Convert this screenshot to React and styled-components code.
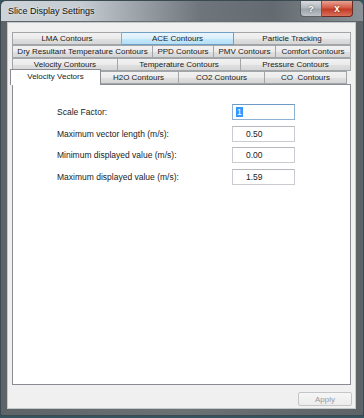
import React from "react";
import styled, { createGlobalStyle } from "styled-components";

const Global = createGlobalStyle`
  html, body { margin: 0; padding: 0; }
  body {
    background: #35535e;
    width: 364px;
    height: 418px;
    overflow: hidden;
    font-family: "Liberation Sans", Arial, sans-serif;
  }
`;

const Window = styled.div`
  width: 364px;
  height: 416px;
  box-sizing: border-box;
  background: linear-gradient(to right, #5e6367, #6c7174 50%, #5e6367);
  border: 1px solid #3a4a50;
  border-radius: 6px 6px 2px 2px;
  display: flex;
  flex-direction: column;
  overflow: hidden;
`;

const TitleBar = styled.div`
  height: 20px;
  flex: 0 0 20px;
  display: flex;
  align-items: flex-start;
  background: linear-gradient(
    to right,
    #cdd4d9 0%,
    #c6cdd2 22%,
    #9aa2a7 38%,
    #6e767b 55%,
    #646b70 75%,
    #8a9297 100%
  );
`;

const Title = styled.div`
  flex: 1;
  padding: 5px 0 0 7px;
  font-size: 9px;
  color: #111;
  text-shadow: 0 0 3px rgba(255, 255, 255, 0.8);
  white-space: nowrap;
`;

const Controls = styled.div`
  display: flex;
  margin-right: 10px;
`;

const CaptionButton = styled.div`
  width: ${(p) => p.$w}px;
  height: 16px;
  box-sizing: border-box;
  border: 1px solid ${(p) => (p.$close ? "#6b2a22" : "#5a6064")};
  border-top: none;
  border-radius: ${(p) => (p.$close ? "0 0 4px 0" : "0 0 0 4px")};
  border-left: ${(p) => (p.$close ? "none" : "1px solid #5a6064")};
  background: ${(p) =>
    p.$close
      ? "linear-gradient(#e8a293 0%, #d35b45 45%, #c23b25 55%, #d8705a 100%)"
      : "linear-gradient(#d6dadd 0%, #b3b9bd 45%, #9ea5aa 55%, #bcc2c6 100%)"};
  color: #fff;
  font-size: ${(p) => (p.$close ? "10px" : "9px")};
  font-weight: bold;
  display: flex;
  align-items: center;
  justify-content: center;
  text-shadow: 0 0 2px rgba(0, 0, 0, 0.6);
`;

const Client = styled.div`
  flex: 1;
  margin: 1px 7px 6px 6px;
  box-sizing: border-box;
  background: #f0f0f0;
  border: 1px solid #c3c8cb;
  padding: 9px 4px 0 4px;
  display: flex;
  flex-direction: column;
`;

const Tabs = styled.div`
  display: flex;
  flex-direction: column;
`;

const TabRow = styled.div`
  display: flex;
  align-items: flex-end;
  height: 13px;
`;

const Tab = styled.div`
  flex: 0 0 ${(p) => p.$w}px;
  height: 13px;
  box-sizing: border-box;
  border: 1px solid ${(p) => (p.$hot ? "#6f9fc4" : "#a3a6a9")};
  border-left-width: ${(p) => (p.$first ? 1 : 0)}px;
  border-bottom-width: ${(p) => (p.$sel ? 0 : 1)}px;
  background: ${(p) =>
    p.$sel
      ? "#ffffff"
      : p.$hot
      ? "linear-gradient(#eaf6fd, #d9f0fc 50%, #c6e9fc 51%, #b4def5)"
      : "linear-gradient(#f2f2f2, #ebebeb 50%, #e0e0e0 51%, #d6d6d6)"};
  font-size: 8px;
  color: #1b1b1b;
  display: flex;
  align-items: center;
  justify-content: center;
  white-space: nowrap;
  overflow: hidden;
  ${(p) =>
    p.$sel &&
    `
    height: 16px;
    margin: -2px -2px -1px -2px;
    border-left-width: 1px;
    border-color: #898c95;
    position: relative;
    z-index: 1;
    padding-bottom: 2px;
  `}
`;

const Panel = styled.div`
  height: 301px;
  box-sizing: border-box;
  background: #ffffff;
  border: 1px solid #898c95;
  padding: 19px 0 0 44px;
`;

const Form = styled.div`
  display: grid;
  grid-template-columns: 175px 63px;
  grid-auto-rows: 16px;
  row-gap: 5.5px;
`;

const Label = styled.div`
  font-size: 8.5px;
  color: #222;
  display: flex;
  align-items: center;
  white-space: nowrap;
`;

const Field = styled.div`
  box-sizing: border-box;
  border: 1px solid ${(p) => (p.$focus ? "#8db2d3" : "#c9ccd0")};
  border-top-color: ${(p) => (p.$focus ? "#6e9bc6" : "#b5b9bd")};
  background: #fff;
  font-size: 8.5px;
  color: #222;
  display: flex;
  align-items: center;
  padding-left: ${(p) => (p.$focus ? 3 : 13)}px;
`;

const Selected = styled.span`
  background: #3399ff;
  color: #fff;
  padding: 0 1px;
  line-height: 10px;
`;

const Footer = styled.div`
  display: flex;
  justify-content: flex-end;
  padding-top: 7px;
`;

const Button = styled.div`
  width: 54px;
  height: 14px;
  box-sizing: border-box;
  border: 1px solid #c3c6c9;
  border-radius: 2px;
  background: linear-gradient(#f6f6f6, #ececec);
  font-size: 8px;
  color: #9a9a9a;
  display: flex;
  align-items: center;
  justify-content: center;
  margin-right: -1px;
`;

const rows = [
  [
    { t: "LMA Contours", w: 110 },
    { t: "ACE Contours", w: 112, hot: true },
    { t: "Particle Tracking", w: 117 },
  ],
  [
    { t: "Dry Resultant Temperature Contours", w: 141 },
    { t: "PPD Contours", w: 61 },
    { t: "PMV Contours", w: 62 },
    { t: "Comfort Contours", w: 75 },
  ],
  [
    { t: "Velocity Contours", w: 106 },
    { t: "Temperature Contours", w: 123 },
    { t: "Pressure Contours", w: 110 },
  ],
  [
    { t: "Velocity Vectors", w: 91, sel: true },
    { t: "H2O Contours", w: 80 },
    { t: "CO2 Contours", w: 86 },
    { t: "CO  Contours", w: 82 },
  ],
];

const fields = [
  { l: "Scale Factor:", v: "1", focus: true },
  { l: "Maximum vector length (m/s):", v: "0.50" },
  { l: "Minimum displayed value (m/s):", v: "0.00" },
  { l: "Maximum displayed value (m/s):", v: "1.59" },
];

export default function App() {
  return (
    <>
      <Global />
      <Window>
        <TitleBar>
          <Title>Slice Display Settings</Title>
          <Controls>
            <CaptionButton $w={22}>?</CaptionButton>
            <CaptionButton $w={31} $close>
              x
            </CaptionButton>
          </Controls>
        </TitleBar>
        <Client>
          <Tabs>
            {rows.map((r, i) => (
              <TabRow key={i}>
                {r.map((tab, j) => (
                  <Tab
                    key={tab.t}
                    $w={tab.w}
                    $first={j === 0}
                    $hot={tab.hot}
                    $sel={tab.sel}
                  >
                    {tab.t.replace(/ /g, "\u00a0")}
                  </Tab>
                ))}
              </TabRow>
            ))}
          </Tabs>
          <Panel>
            <Form>
              {fields.map((f) => (
                <React.Fragment key={f.l}>
                  <Label>{f.l}</Label>
                  <Field $focus={f.focus}>
                    {f.focus ? <Selected>{f.v}</Selected> : f.v}
                  </Field>
                </React.Fragment>
              ))}
            </Form>
          </Panel>
          <Footer>
            <Button>Apply</Button>
          </Footer>
        </Client>
      </Window>
    </>
  );
}
